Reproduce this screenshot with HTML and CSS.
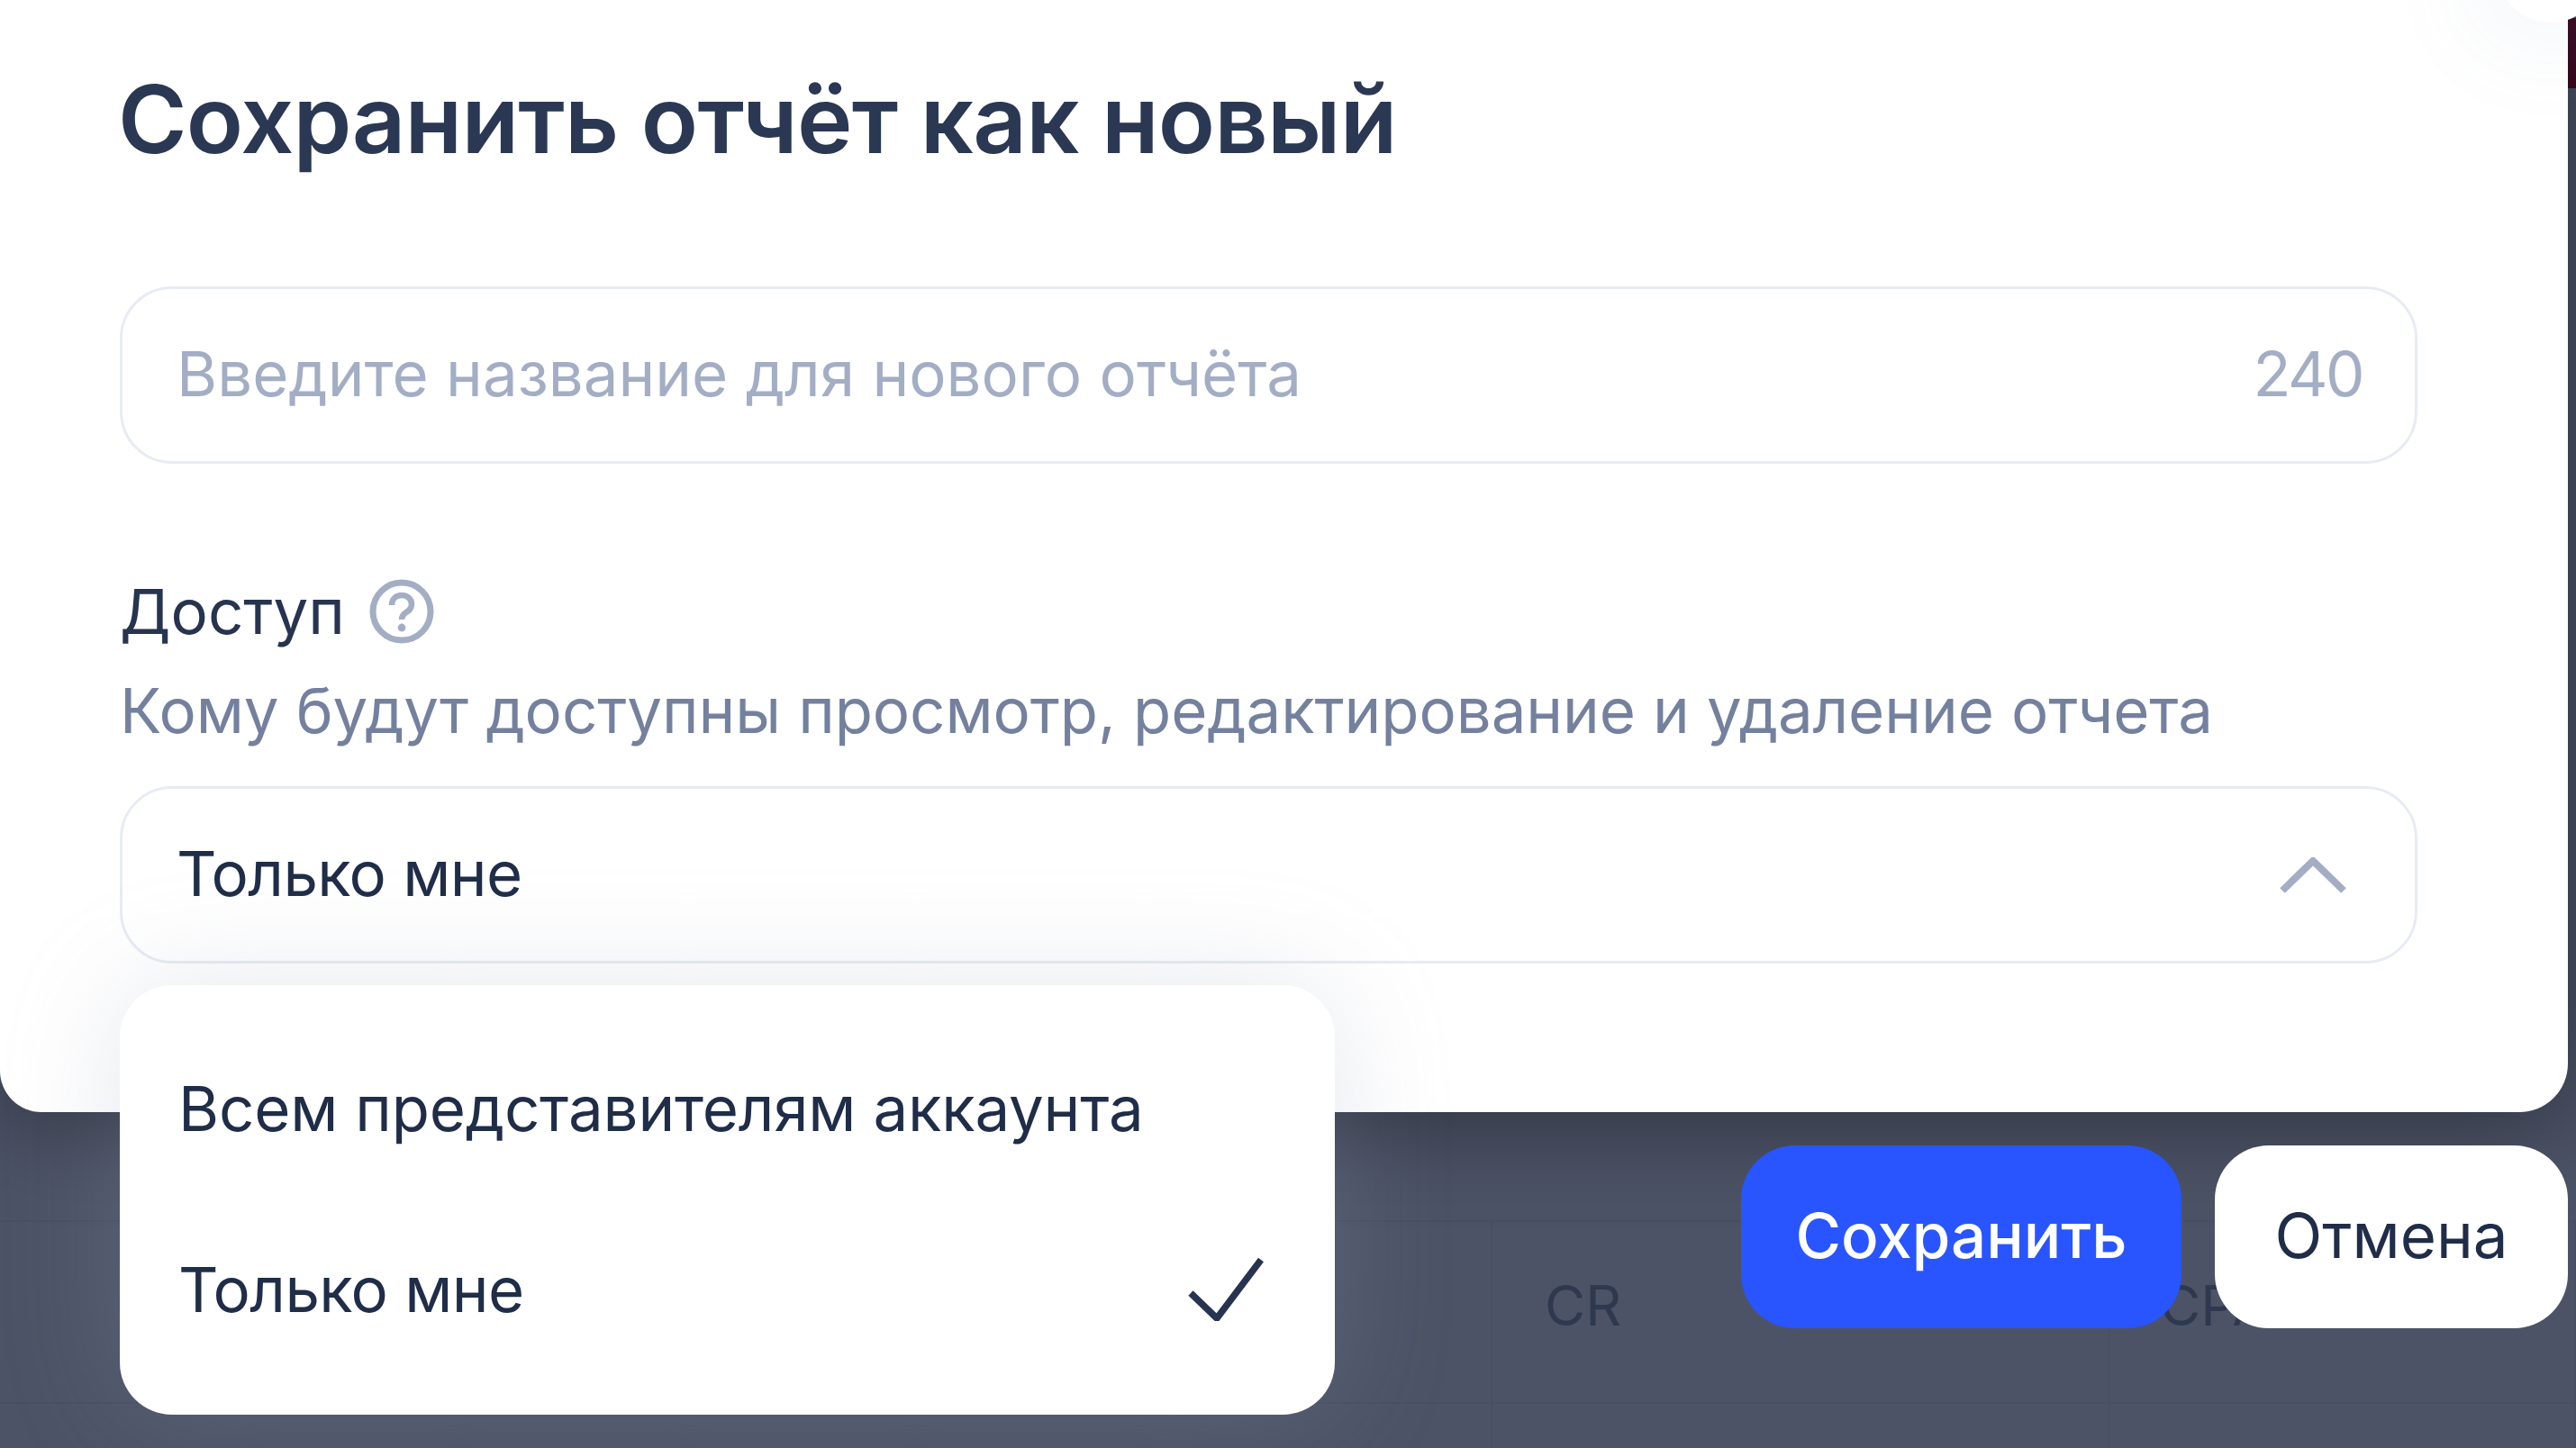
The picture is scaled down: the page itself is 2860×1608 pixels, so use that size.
FILE: index.html
```html
<!DOCTYPE html>
<html lang="ru">
<head>
<meta charset="utf-8">
<title>Сохранить отчёт как новый</title>
<link rel="stylesheet" href="styles.css">
</head>
<body>
<div class="stage">
  <div class="page-strip"></div>
  <div class="report-table">
    <div class="cell"></div>
    <div class="cell"><span class="col-name">CR</span></div>
    <div class="cell cell-cpa"><span class="col-name">CPA</span></div>
    <div class="cell"></div>
    <div class="cell"></div>
    <div class="cell"></div>
  </div>

  <section class="modal">
    <h1 class="modal-title">Сохранить отчёт как новый</h1>
    <div class="field name-field">
      <span class="placeholder">Введите название для нового отчёта</span>
      <span class="counter">240</span>
    </div>
    <div class="access-label">
      <span>Доступ</span>
      <svg class="help-icon" viewBox="0 0 72 72" aria-hidden="true">
        <circle cx="36" cy="36" r="32" fill="none" stroke="#a3aec5" stroke-width="7"/>
        <path d="M25 29c0-7 5-11 11-11s11 4 11 10c0 5-3 7-6 9-3 2-5 4-5 8" fill="none" stroke="#a3aec5" stroke-width="6.5"/>
        <circle cx="36" cy="54" r="4.4" fill="#a3aec5"/>
      </svg>
    </div>
    <p class="access-desc">Кому будут доступны просмотр, редактирование и удаление отчета</p>
    <div class="field select-field">
      <span class="select-value">Только мне</span>
      <svg class="chevron" viewBox="0 0 74 40" aria-hidden="true">
        <path d="M3 37 37 4l34 33" fill="none" stroke="#a3aec5" stroke-width="8"/>
      </svg>
    </div>
  </section>

  <button class="close-btn" aria-label="Закрыть"></button>

  <ul class="dropdown">
    <li class="option">Всем представителям аккаунта</li>
    <li class="option">
      <span class="option-short">Только мне</span>
      <svg class="check" viewBox="0 0 84 71" aria-hidden="true">
        <path d="M3 40l29 28L81 3" fill="none" stroke="#26344f" stroke-width="7.5"/>
      </svg>
    </li>
  </ul>

  <div class="actions">
    <button class="btn btn-primary">Сохранить</button>
    <button class="btn btn-secondary">Отмена</button>
  </div>
</div>
</body>
</html>
```
FILE: styles.css
```css
* { box-sizing: border-box; }
html, body { margin: 0; padding: 0; }
body {
  width: 2860px;
  height: 1608px;
  overflow: hidden;
  font-family: Inter, "Noto Sans", sans-serif;
  color: #1f2d48;
}
.stage {
  position: relative;
  width: 2860px;
  height: 1608px;
  overflow: hidden;
  background: #4c5366;
  padding-top: 20px;
}
.page-strip {
  width: 9px;
  height: 78px;
  margin-left: auto;
  background: #3f0c24;
}
.report-table {
  display: grid;
  grid-template-columns: 1657px 686px 517px;
  grid-template-rows: 202px 60px;
  margin-top: 1257px;
  border-top: 2px solid #484f62;
}
.cell {
  padding: 48px 0 0 58px;
  border-right: 2px solid #484f62;
  border-bottom: 2px solid #484f62;
}
.cell-cpa { padding-left: 55px; }
.col-name {
  font-size: 62px;
  line-height: 90px;
  color: #2e384f;
}
.modal {
  position: absolute;
  left: 0;
  top: 0;
  width: 2851px;
  height: 1235px;
  padding: 60px 167px 0 133px;
  background: #fff;
  border-radius: 0 0 54px 46px;
  box-shadow: 0 8px 110px rgba(0, 0, 0, .42);
}
.modal-title {
  margin: 0 0 0 -2px;
  font-size: 104px;
  line-height: 144px;
  font-weight: 600;
  letter-spacing: -.8px;
  color: #2a3853;
}
.field {
  display: flex;
  align-items: center;
  justify-content: space-between;
  height: 197px;
  padding: 0 58px 4px 60px;
  border: 3px solid #e7ebf4;
  border-radius: 58px;
  font-size: 69px;
  line-height: 88px;
}
.name-field { margin-top: 114px; }
.placeholder, .counter { color: #a3aec5; }
.counter { letter-spacing: -2.5px; }
.access-label {
  display: flex;
  align-items: center;
  gap: 27px;
  margin-top: 128px;
  font-size: 69px;
  line-height: 72px;
  color: #26344f;
}
.help-icon { width: 72px; height: 72px; flex: none; }
.access-desc {
  margin: 29px 0 0;
  font-size: 69px;
  line-height: 90px;
  letter-spacing: -.1px;
  color: #74819e;
}
.select-field { margin-top: 39px; padding-right: 76px; }
.select-value { color: #1f2d48; letter-spacing: -.6px; }
.chevron { width: 74px; height: 40px; flex: none; margin-top: 4px; }
.close-btn {
  position: absolute;
  left: 2772px;
  top: -95px;
  width: 120px;
  height: 120px;
  padding: 0;
  border: 0;
  border-radius: 50%;
  background: #fff;
  box-shadow: 0 0 130px rgba(120, 140, 185, .16);
}
.dropdown {
  position: absolute;
  left: 133px;
  top: 1094px;
  width: 1349px;
  height: 477px;
  margin: 0;
  padding: 36px 77px 0 65px;
  list-style: none;
  background: #fff;
  border-radius: 58px;
  box-shadow: 0 0 130px rgba(150, 160, 185, .24);
}
.option {
  display: flex;
  align-items: center;
  justify-content: space-between;
  height: 201px;
  font-size: 69px;
  line-height: 90px;
  letter-spacing: -.2px;
  color: #1f2d48;
}
.option-short { letter-spacing: -.6px; }
.check { width: 88px; height: 71px; flex: none; }
.actions {
  position: absolute;
  left: 1933px;
  top: 1272px;
  display: flex;
  gap: 37px;
}
.btn {
  height: 203px;
  padding: 0 0 4px;
  border: 0;
  border-radius: 60px;
  font-family: inherit;
  font-size: 69px;
  line-height: 90px;
}
.btn-primary {
  width: 489px;
  background: #2855ff;
  color: #fff;
  font-weight: 500;
}
.btn-secondary {
  width: 392px;
  background: #fff;
  color: #1f2d48;
}
```
